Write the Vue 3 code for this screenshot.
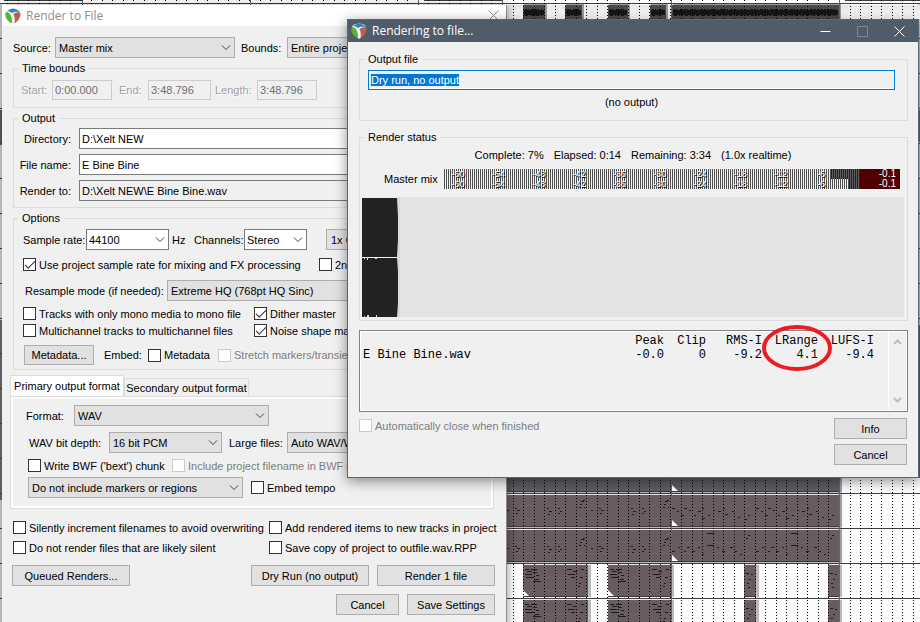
<script setup>
import { ref, onMounted } from 'vue'

const outputBox = ref(null)
onMounted(() => {
  outputBox.value.focus()
  outputBox.value.select()
})

// Arrange view behind the dialogs
const gridLines = Array.from({ length: 88 }, (_, k) => Math.floor(7.6 + k * 10.53 - 10.53))
const trackLines = Array.from({ length: 18 }, (_, k) => 3 + k * 35)
const regionLines = [82, 250, 418, 502, 671, 839]
const audioItems = [
  { x: 523, w: 22 }, { x: 565, w: 17 }, { x: 608, w: 20 }, { x: 650, w: 16 }, { x: 672, w: 167 }
]

const phraseA = [
  [0, 15, 2], [8, 13, 2], [10, 15, 3], [9, 18, 2],
  [40, 13, 2], [42, 16, 3], [41, 19, 2], [51, 13, 2], [53, 16, 2], [51, 18, 2],
  [73, 9, 2], [74, 6, 3], [76, 5, 2], [77, 12, 1], [72, 12, 2]
]
const phraseB = [
  [0, 13, 3], [5, 16, 2], [9, 20, 3], [12, 13, 3], [17, 15, 2], [22, 20, 2], [26, 16, 3], [30, 13, 2],
  [30, 23, 3], [36, 20, 2], [41, 15, 2], [46, 16, 3], [51, 13, 2], [53, 19, 3], [60, 16, 2], [66, 22, 2], [72, 24, 3], [76, 20, 2]
]
const phraseC = [
  [0, 21, 3], [6, 17, 2], [12, 21, 2], [15, 17, 3], [20, 21, 3], [26, 17, 2], [30, 24, 2],
  [35, 3, 7], [35, 15, 7], [45, 17, 2], [50, 21, 3], [58, 17, 3], [63, 21, 2], [68, 24, 2], [74, 8, 2], [76, 5, 2]
]
const phraseD = [
  [2, 4, 4], [8, 4, 6], [4, 6, 5], [10, 7, 4], [2, 9, 7], [13, 10, 3], [3, 12, 8], [12, 14, 4], [10, 16, 8],
  [44, 4, 5], [50, 6, 4], [45, 9, 7], [48, 12, 4], [57, 12, 3], [56, 18, 2], [55, 21, 2], [58, 4, 3]
]
const phraseE = [[2, 8, 3], [5, 14, 2], [3, 18, 2], [4, 22, 2], [7, 9, 2]]

const twice = (notes) => notes.concat(notes.map(([x, y, w]) => [x + 84, y, w]))

const midiItems = [
  { x: 507, y: 460, w: 164, h: 31, tone: 'slate', notes: [] },
  { x: 672, y: 460, w: 167, h: 31, tone: 'slate', notes: [] },
  { x: 507, y: 495, w: 164, h: 31, tone: 'mauve', notes: twice(phraseA) },
  { x: 672, y: 495, w: 167, h: 31, tone: 'mauve', notes: twice(phraseB) },
  { x: 507, y: 530, w: 164, h: 31, tone: 'mauve', notes: twice(phraseA.map(([x, y, w]) => [x, y + 3, w])) },
  { x: 672, y: 530, w: 167, h: 31, tone: 'mauve', notes: twice(phraseC) },
  ...[565, 600].flatMap((y) => [
    { x: 523, y, w: 65, h: 31, tone: 'mauve', notes: phraseD },
    { x: 608, y, w: 63, h: 31, tone: 'mauve', notes: phraseD },
    { x: 744, y, w: 12, h: 31, tone: 'mauve', notes: phraseE },
    { x: 828, y, w: 11, h: 31, tone: 'mauve', notes: phraseE }
  ])
]

const meterTicks = [-60, -54, -48, -42, -36, -30, -24, -18, -12, -6]

const stats = {
  head: ['Peak', 'Clip', 'RMS-I', 'LRange', 'LUFS-I'],
  rows: [{ file: 'E Bine Bine.wav', values: ['-0.0', '0', '-9.2', '4.1', '-9.4'] }]
}
</script>

<template>
  <main class="desktop">
    <svg class="arrange" aria-hidden="true">
      <defs>
        <linearGradient id="lane" x1="0" y1="0" x2="0" y2="1">
          <stop offset="0" stop-color="#e6e6e6" /><stop offset="1" stop-color="#ffffff" />
        </linearGradient>
      </defs>
      <rect width="100%" height="100%" fill="#fcfcfc" />
      <rect x="0" y="4" width="2" height="618" fill="#c4c4c6" />
      <rect x="0" y="110" width="2" height="35" fill="#555" />
      <rect x="0" y="320" width="2" height="180" fill="#66646a" />
      <rect x="918" y="4" width="2" height="474" fill="#c9cacd" />
      <rect x="918" y="110" width="2" height="32" fill="#66646a" />
      <rect x="918" y="325" width="2" height="153" fill="#5c5b62" />
      <rect x="506" y="5" width="414" height="14" fill="url(#lane)" />
      <rect x="4" y="0" width="78" height="1" fill="#3c3c3c" />
      <rect x="424" y="0" width="78" height="1" fill="#3c3c3c" />
      <rect x="845" y="0" width="75" height="1" fill="#3c3c3c" />
      <rect x="507" y="478" width="335" height="85" fill="#b9b9b9" />
      <g v-for="y in trackLines" :key="'t' + y">
        <rect x="0" :y="y" width="100%" height="1" fill="#3f3f3f" />
      </g>
      <g v-for="a in audioItems" :key="'a' + a.x">
        <rect :x="a.x + 1" y="4" :width="a.w + 1" height="16" fill="#9b9b9b" />
        <rect :x="a.x" y="5" :width="a.w" height="16" fill="#4a4a4a" />
        <rect :x="a.x + 1" y="10" :width="a.w - 2" height="5" fill="#161616" />
        <path :d="`M${a.x + 2} 9.5H${a.x + a.w - 3}`" stroke="#161616" stroke-dasharray="2 1 1 2 3 1" />
        <path :d="`M${a.x + 2} 15.5H${a.x + a.w - 3}`" stroke="#161616" stroke-dasharray="3 2 1 1 2 2" />
      </g>
      <g v-for="(m, i) in midiItems" :key="'m' + i" :transform="`translate(${m.x} ${m.y})`">
        <rect x="1" y="0" :width="m.w + 2" :height="m.h + 1" fill="#8d8d8d" opacity="0.6" />
        <rect :width="m.w" :height="m.h" :class="m.tone" />
        <rect :y="-1" :width="m.w" height="1" fill="#e9e9e9" />
        <rect :y="m.h" :width="m.w" height="1" fill="#3f3b3d" />
        <path :d="`M0 ${m.h - 6}V${m.h}H6Z`" fill="#fff" v-if="m.w > 20 && m.x > 510" />
      </g>
      <path
        v-for="x in gridLines" :key="'g' + x"
        :d="`M${x + 0.5} 0V622`" stroke="#000" stroke-dasharray="1 2"
      />
      <g v-for="(m, i) in midiItems" :key="'n' + i" :transform="`translate(${m.x} ${m.y})`" fill="#1f1a1d">
        <rect v-for="(n, j) in m.notes" :key="j" :x="n[0]" :y="n[1]" :width="n[2]" height="1" />
      </g>
      <rect v-for="x in regionLines" :key="'r' + x" :x="x" y="0" width="1" height="100%" fill="#536a78" />
    </svg>

    <section class="window render-window">
      <header class="titlebar">
        <svg class="logo" viewBox="0 0 16 16" aria-hidden="true">
          <path d="M2 2Q8-1 14 2Q16 7 12 13L8 16L4 13Q-1 7 2 2Z" fill="#eef3ee" />
          <path d="M2 3Q8-2 14 3Q14.500 4 15 5Q11 2 7 5Q5 3 2 3Z" fill="#2a86bd" />
          <path d="M1 4Q4 4 5.500 7Q7.500 11 7 15.500Q0 12 .3 6Z" fill="#55b335" />
          <path d="M8.500 6Q12 3 15.500 5Q16 11 9.500 15.500Q10.500 10 8.500 6Z" fill="#b9604f" />
        </svg>
        <h1>Render to File</h1>
        <button class="caption-btn" aria-label="Close">
          <svg viewBox="0 0 11 11"><path d="M.5.5l10 10M10.5.5l-10 10" /></svg>
        </button>
      </header>

      <form class="render-body" @submit.prevent>
        <div class="row source-row">
          <label for="source">Source:</label>
          <span class="combo w180"><select id="source"><option>Master mix</option></select><svg viewBox="0 0 10 6"><path d="M1 .5l4 4 4-4" /></svg></span>
          <label for="bounds" class="bounds">Bounds:</label>
          <span class="combo grow"><select id="bounds"><option>Entire project</option></select><svg viewBox="0 0 10 6"><path d="M1 .5l4 4 4-4" /></svg></span>
        </div>

        <fieldset class="group time">
          <legend>Time bounds</legend>
          <div class="row off">
            <label for="start" class="w31">Start:</label>
            <input id="start" class="w60" value="0:00.000" disabled>
            <label for="end" class="w29">End:</label>
            <input id="end" class="w63" value="3:48.796" disabled>
            <label for="len" class="w42">Length:</label>
            <input id="len" class="w60" value="3:48.796" disabled>
          </div>
        </fieldset>

        <fieldset class="group output">
          <legend>Output</legend>
          <label for="dir">Directory:</label><input id="dir" value="D:\Xelt NEW">
          <label for="file">File name:</label><input id="file" value="E Bine Bine">
          <label for="to">Render to:</label><input id="to" value="D:\Xelt NEW\E Bine Bine.wav" readonly>
        </fieldset>

        <fieldset class="group options">
          <legend>Options</legend>
          <div class="row rate-row">
            <label for="rate" class="w63">Sample rate:</label>
            <span class="combo white w83"><select id="rate"><option>44100</option></select><svg viewBox="0 0 10 6"><path d="M1 .5l4 4 4-4" /></svg></span>
            <span class="hz">Hz</span>
            <label for="chan" class="w50">Channels:</label>
            <span class="combo white w63"><select id="chan"><option>Stereo</option></select><svg viewBox="0 0 10 6"><path d="M1 .5l4 4 4-4" /></svg></span>
            <button class="btn speed">1x Offline</button>
          </div>
          <div class="row two-col wide">
            <label class="check"><input type="checkbox" checked>Use project sample rate for mixing and FX processing</label>
            <label class="check"><input type="checkbox">2nd pass render</label>
          </div>
          <div class="row resample-row">
            <label for="resample">Resample mode (if needed):</label>
            <span class="combo grow"><select id="resample"><option>Extreme HQ (768pt HQ Sinc)</option></select><svg viewBox="0 0 10 6"><path d="M1 .5l4 4 4-4" /></svg></span>
          </div>
          <div class="row two-col">
            <label class="check"><input type="checkbox">Tracks with only mono media to mono file</label>
            <label class="check"><input type="checkbox" checked>Dither master</label>
            <label class="check"><input type="checkbox">Multichannel tracks to multichannel files</label>
            <label class="check"><input type="checkbox" checked>Noise shape master</label>
          </div>
          <div class="row meta-row">
            <button class="btn">Metadata...</button>
            <span class="embed">Embed:</span>
            <label class="check w70"><input type="checkbox">Metadata</label>
            <label class="check gray"><input type="checkbox" disabled>Stretch markers/transients</label>
          </div>
        </fieldset>

        <div class="tabs">
          <button class="tab active">Primary output format</button>
          <button class="tab">Secondary output format</button>
        </div>
        <div class="panel">
          <div class="row">
            <label for="format" class="w48">Format:</label>
            <span class="combo w195"><select id="format"><option>WAV</option></select><svg viewBox="0 0 10 6"><path d="M1 .5l4 4 4-4" /></svg></span>
          </div>
          <div class="row depth-row">
            <label for="depth" class="w80">WAV bit depth:</label>
            <span class="combo w113"><select id="depth"><option>16 bit PCM</option></select><svg viewBox="0 0 10 6"><path d="M1 .5l4 4 4-4" /></svg></span>
            <label for="large" class="large">Large files:</label>
            <span class="combo grow"><select id="large"><option>Auto WAV/Wave64</option></select><svg viewBox="0 0 10 6"><path d="M1 .5l4 4 4-4" /></svg></span>
          </div>
          <div class="row bwf-row">
            <label class="check w144"><input type="checkbox">Write BWF ('bext') chunk</label>
            <label class="check gray"><input type="checkbox" disabled>Include project filename in BWF data</label>
          </div>
          <div class="row marker-row">
            <span class="combo w215"><select aria-label="Markers"><option>Do not include markers or regions</option></select><svg viewBox="0 0 10 6"><path d="M1 .5l4 4 4-4" /></svg></span>
            <label class="check"><input type="checkbox">Embed tempo</label>
          </div>
        </div>

        <div class="final-checks">
          <label class="check"><input type="checkbox">Silently increment filenames to avoid overwriting</label>
          <label class="check"><input type="checkbox">Add rendered items to new tracks in project</label>
          <label class="check"><input type="checkbox">Do not render files that are likely silent</label>
          <label class="check"><input type="checkbox">Save copy of project to outfile.wav.RPP</label>
        </div>
        <div class="actions">
          <button class="btn big first">Queued Renders...</button>
          <button class="btn big">Dry Run (no output)</button>
          <button class="btn big">Render 1 file</button>
        </div>
        <div class="actions last">
          <button class="btn w63">Cancel</button>
          <button class="btn w88">Save Settings</button>
        </div>
      </form>
    </section>

    <section class="window progress-window">
      <header class="titlebar dark">
        <svg class="logo" viewBox="0 0 16 16" aria-hidden="true">
          <path d="M2 2Q8-1 14 2Q16 7 12 13L8 16L4 13Q-1 7 2 2Z" fill="#eef3ee" />
          <path d="M2 3Q8-2 14 3Q14.500 4 15 5Q11 2 7 5Q5 3 2 3Z" fill="#2a86bd" />
          <path d="M1 4Q4 4 5.500 7Q7.500 11 7 15.500Q0 12 .3 6Z" fill="#55b335" />
          <path d="M8.500 6Q12 3 15.500 5Q16 11 9.500 15.500Q10.500 10 8.500 6Z" fill="#b9604f" />
        </svg>
        <h1>Rendering to file...</h1>
        <button class="caption-btn" aria-label="Minimize"><svg viewBox="0 0 11 11"><path d="M.5 5.5h10" /></svg></button>
        <button class="caption-btn dim" aria-label="Maximize" disabled><svg viewBox="0 0 11 11"><path d="M.5.5h10v10h-10z" /></svg></button>
        <button class="caption-btn" aria-label="Close"><svg viewBox="0 0 11 11"><path d="M.5.5l10 10M10.5.5l-10 10" /></svg></button>
      </header>

      <div class="progress-body">
        <fieldset class="group outfile">
          <legend>Output file</legend>
          <input ref="outputBox" aria-label="Output file" value="Dry run, no output" readonly>
          <p>(no output)</p>
        </fieldset>

        <fieldset class="group status">
          <legend>Render status</legend>
          <p class="progress-line">
            <span>Complete: 7%</span><span>Elapsed: 0:14</span><span>Remaining: 3:34</span><span>(1.0x realtime)</span>
          </p>
          <div class="meter-row">
            <span>Master mix</span>
            <div class="meter">
              <div v-for="ch in 2" :key="ch" class="channel">
                <div class="level"><i v-for="t in meterTicks" :key="t">{{ t }}</i></div>
                <div class="hold" :class="{ short: ch === 2 }"></div>
                <b>-0.1</b>
              </div>
            </div>
          </div>
          <svg class="wave" aria-hidden="true">
            <rect width="100%" height="120" fill="#e3e3e3" />
            <rect width="35" height="1" fill="#f0f0f0" />
            <rect x="35" width="3" height="120" fill="#d9d9d9" />
            <path d="M0 1H35L36 20V42L35 60H0ZM0 61H35L36 75V106L35 120H0Z" fill="#222" />
            <path d="M0 60.5H35" stroke="#f0f0f0" />
            <path d="M2 61h1v1h-1zM5 61h1v2h-1zM13 61h2v1h-2zM2 119h1v1h-1zM5 118h2v2h-2zM14 118h1v2h-1z" fill="#ddd" />
          </svg>
        </fieldset>

        <div class="stats">
          <div class="report">
            <table>
              <thead>
                <tr><th></th><th v-for="h in stats.head" :key="h">{{ h }}</th></tr>
              </thead>
              <tbody>
                <tr v-for="r in stats.rows" :key="r.file">
                  <td>{{ r.file }}</td><td v-for="(v, i) in r.values" :key="i">{{ v }}</td>
                </tr>
              </tbody>
            </table>
          </div>
          <div class="scrollbar">
            <svg viewBox="0 0 9 6"><path d="M1 5l3.500-3.500L8 5" /></svg>
            <svg viewBox="0 0 9 6"><path d="M1 1l3.500 3.500L8 1" /></svg>
          </div>
          <svg class="marker" viewBox="0 0 70 46" aria-hidden="true"><ellipse cx="35" cy="23" rx="33" ry="21" /></svg>
        </div>

        <div class="foot">
          <label class="check gray"><input type="checkbox" disabled>Automatically close when finished</label>
          <div class="foot-buttons">
            <button class="btn">Info</button>
            <button class="btn">Cancel</button>
          </div>
        </div>
      </div>
    </section>
  </main>
</template>

<style>
body {
  margin: 0;
  overflow: hidden;
}
</style>

<style scoped>
* {
  box-sizing: border-box;
}
.desktop {
  position: relative;
  height: 100vh;
  overflow: hidden;
  font: 11px/14px "Liberation Sans", Arial, sans-serif;
  color: #000;
  white-space: nowrap;
}
.arrange {
  position: absolute;
  width: 100%;
  height: 100%;
}
.slate { fill: #5c5b62; }
.mauve { fill: #695c60; }

.window {
  position: absolute;
  background: #f0f0f0;
}
.render-window {
  left: 2px;
  top: 5px;
  width: 505px;
  min-height: 640px;
  border-right: 1px solid #8d8d8d;
  box-shadow: 2px 0 8px rgba(0, 0, 0, 0.3);
}
.progress-window {
  left: 347px;
  right: 1px;
  top: 19px;
  border: 1px solid #56677a;
  box-shadow: 0 3px 12px rgba(0, 0, 0, 0.45);
}

.titlebar {
  display: flex;
  align-items: center;
  height: 21px;
  padding-left: 3px;
  background: #fff;
  color: #8f8f8f;
}
.titlebar.dark {
  height: 22px;
  background: #505c6a;
  color: #fff;
}
.titlebar h1 {
  flex: 1;
  margin: 0 0 0 5px;
  font: 12px/16px "Open Sans", "Noto Sans", sans-serif;
}
.logo {
  width: 16px;
  height: 16px;
}
.caption-btn {
  width: 37px;
  height: 20px;
  padding: 0;
  border: 0;
  background: none;
  color: inherit;
}
.render-window .caption-btn {
  width: 26px;
}
.caption-btn svg {
  display: block;
  width: 11px;
  height: 11px;
  margin: auto;
  fill: none;
  stroke: currentColor;
}
.dim { color: #7d8893; }

input, select, button {
  font: inherit;
  color: inherit;
  margin: 0;
  border-radius: 0;
}
.btn {
  height: 21px;
  padding: 0;
  border: 1px solid #adadad;
  background: #e1e1e1;
}
.combo {
  display: grid;
  align-items: center;
  height: 21px;
}
.combo > * { grid-area: 1 / 1; }
.combo select {
  appearance: none;
  width: 100%;
  height: 21px;
  padding: 0 3px;
  border: 1px solid #adadad;
  background: #e1e1e1;
  outline: 0;
}
.combo.white select {
  padding: 0 2px;
  border-color: #7a7a7a;
  background: #fff;
}
.combo svg {
  justify-self: end;
  width: 10px;
  height: 6px;
  margin-right: 4px;
  fill: none;
  stroke: #444;
  pointer-events: none;
}
input:not([type="checkbox"]) {
  height: 21px;
  padding: 0 2px;
  border: 1px solid #7a7a7a;
  background: #fff;
  outline: 0;
}
input[readonly]:not([type="checkbox"]) { background: #f0f0f0; }

.check {
  display: flex;
  align-items: center;
  gap: 3px;
  height: 15px;
}
.check input {
  appearance: none;
  display: grid;
  width: 13px;
  height: 13px;
  border: 1px solid #333;
  background: #fff;
}
.check input:checked::before {
  content: "";
  width: 9px;
  height: 4px;
  margin: 2px 0 0 1px;
  border: solid #333;
  border-width: 0 0 1px 1px;
  transform: rotate(-45deg);
}
.check input:disabled { border-color: #ccc; }
.gray { color: #7d7d7d; }

.group {
  --inset: 0px;
  min-width: 0;
  margin: 0;
  padding: 0 0 0 var(--inset);
  border: 1px solid #dcdcdc;
}
.group legend {
  margin-left: calc(4px - var(--inset));
  padding: 0 4px;
  line-height: 13px;
}

.row {
  display: flex;
  align-items: center;
}
.grow { flex: 1; }
.w29 { width: 29px; }
.w31 { width: 31px; }
.w42 { width: 42px; }
.w48 { width: 48px; }
.w50 { width: 50px; }
.w60 { width: 60px; }
.w63 { width: 63px; }
.w70 { width: 70px; }
.w80 { width: 80px; }
.w83 { width: 83px; }
.w88 { width: 88px; }
.w113 { width: 113px; }
.w144 { width: 144px; }
.w180 { width: 180px; }
.w195 { width: 195px; }
.w215 { width: 215px; }

.render-body { padding: 11px 11px 0 8px; }
.source-row { padding-left: 3px; }
.source-row label { width: 42px; }
.source-row .bounds { width: 52px; padding-left: 6px; }

.render-body .group { margin-left: 3px; }
.time {
  height: 46px;
  margin-top: 4px;
}
.time .row { padding: 5px 0 0 7px; }
.time label {
  color: #a0a0a0;
  text-shadow: 1px 1px #fff;
}
.time input:not([type="checkbox"]) {
  height: 20px;
  background: #f0f0f0;
  border: 1px solid #ccc;
  color: #6d6d6d;
}
.time .w29 { margin-left: 7px; }
.time .w42 { margin-left: 4px; }

.output {
  display: grid;
  grid-template-columns: 57px 1fr;
  gap: 5px 8px;
  align-items: center;
  margin-top: 4px;
  padding: 3px 8px 6px 0;
}
.output label { text-align: right; }

.options {
  --inset: 9px;
  margin-top: 4px;
  padding-top: 4px;
  padding-right: 8px;
  padding-bottom: 4px;
}
.hz { width: 25px; padding-left: 3px; }
.speed { width: 90px; margin-left: 19px; text-align: left; padding-left: 4px; }
.two-col {
  display: grid;
  grid-template-columns: 231px 1fr;
  row-gap: 2px;
  margin-top: 5px;
}
.two-col.wide {
  grid-template-columns: 296px 1fr;
  margin-top: 7px;
}
.resample-row { margin-top: 8px; padding-left: 2px; }
.resample-row label { width: 142px; }
.meta-row { margin-top: 7px; padding-left: 1px; }
.meta-row .btn { width: 70px; height: 20px; }
.embed { width: 54px; padding-left: 10px; }

.tabs {
  display: flex;
  align-items: flex-end;
  margin-top: 5px;
}
.tab {
  width: 125px;
  height: 18px;
  padding: 0;
  border: 1px solid #dcdcdc;
  border-bottom: 0;
  background: #f0f0f0;
}
.tab.active {
  width: 114px;
  height: 21px;
  background: #fff;
}
.panel {
  margin-right: 1px;
  padding: 6px 8px 8px 15px;
  border: 3px solid #fff;
  outline: 1px solid #dcdcdc;
  outline-offset: -1px;
}
.panel .w48 { margin-left: -2px; }
.depth-row { margin-top: 6px; padding-left: 1px; }
.large { padding-left: 7px; width: 65px; }
.bwf-row { margin-top: 5px; }
.marker-row { margin-top: 4px; gap: 8px; }

.final-checks {
  display: grid;
  grid-template-columns: 256px 1fr;
  row-gap: 5px;
  margin: 11px 0 0 3px;
}
.actions {
  display: flex;
  justify-content: flex-end;
  gap: 8px;
  margin: 10px 0 0 2px;
}
.actions .first { margin-right: auto; }
.actions.last { margin-top: 8px; }
.big { width: 118px; }

.progress-body { padding: 11px 10px 12px 11px; }
.outfile {
  --inset: 8px;
  padding-top: 4px;
  padding-right: 12px;
  padding-bottom: 11px;
}
.outfile input:not([type="checkbox"]) {
  display: block;
  width: 100%;
  height: 20px;
  border: 1px solid #0078d7;
  box-shadow: inset 0 0 0 1px #fff;
}
.outfile input::selection {
  background: #0078d7;
  color: #fff;
}
.outfile p {
  margin: 5px 0 0;
  text-align: center;
}
.status {
  --inset: 2px;
  margin-top: 10px;
  padding-top: 4px;
  padding-right: 3px;
  padding-bottom: 3px;
}
.progress-line {
  display: flex;
  justify-content: center;
  gap: 10px;
  margin: 0;
}
.meter-row {
  display: flex;
  align-items: center;
  margin: 7px 4px 8px 22px;
}
.meter-row > span {
  width: 60px;
}
.meter {
  flex: 1;
  background: repeating-linear-gradient(90deg, #505050 0 1px, #f4f4f4 1px 2px);
}
.channel {
  display: flex;
  height: 10px;
  line-height: 10px;
  color: #fff;
  font-size: 9px;
}
.level {
  display: flex;
  flex: 1;
  justify-content: space-between;
  padding: 0 3px 0 7px;
}
.level i {
  width: 14px;
  font-style: normal;
  text-align: center;
  text-shadow: 1px 1px #000;
}
.hold {
  width: 29px;
  background: repeating-linear-gradient(90deg, #222 0 1px, #5c5c5c 1px 2px);
}
.hold.short {
  width: 11px;
  margin-left: 18px;
}
.channel b {
  width: 40px;
  padding-right: 4px;
  background: #500000;
  font-weight: 400;
  font-size: 10px;
  text-align: right;
}
.wave {
  display: block;
  width: 100%;
  height: 120px;
}

.stats {
  position: relative;
  display: flex;
  height: 82px;
  margin-top: 9px;
  border: 1px solid #828282;
  box-shadow: inset 0 0 0 1px #fff;
}
.report {
  flex: 1;
  padding: 3px 13px 0 3px;
}
.stats table {
  width: 100%;
  border-collapse: collapse;
  table-layout: fixed;
  font: 12px/14px "Liberation Mono", "Courier New", monospace;
}
.stats th, .stats td {
  width: 56px;
  padding: 0;
  font-weight: 400;
  text-align: right;
}
.stats th:first-child { width: auto; }
.stats td:first-child { text-align: left; }
.stats th:nth-child(3) { width: 42px; }
.scrollbar {
  display: flex;
  flex-direction: column;
  justify-content: space-between;
  align-items: center;
  width: 18px;
  margin: 1px;
  padding: 7px 0;
  border-left: 1px solid #fff;
}
.scrollbar svg {
  width: 9px;
  height: 6px;
  fill: none;
  stroke: #bdbdbd;
  stroke-width: 2;
}
.marker {
  position: absolute;
  top: -6px;
  right: 75px;
  width: 70px;
  height: 46px;
  fill: none;
  stroke: #ed1c24;
  stroke-width: 4;
}
.foot {
  display: flex;
  justify-content: space-between;
  margin-top: 6px;
  padding-right: 1px;
}
.foot-buttons {
  display: grid;
  gap: 5px;
  width: 73px;
}
</style>
